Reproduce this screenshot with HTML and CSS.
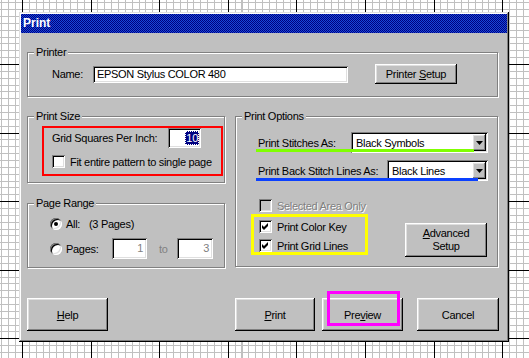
FILE: index.html
```html
<!DOCTYPE html>
<html lang="en">
<head>
    <meta charset="UTF-8">
    <title>Print</title>
    <link rel="stylesheet" href="styles.css">
</head>
<body>
    <div class="window">
        <div class="titlebar"><span class="title">Print</span></div>

        <div class="window-body">
            <fieldset class="group">
                <legend>Printer</legend>
                <div class="printer-row">
                    <span class="name-label">Name:</span>
                    <div class="sunken name-field">EPSON Stylus COLOR 480</div>
                    <button class="btn setup-btn">Printer <u>S</u>etup</button>
                </div>
            </fieldset>

            <div class="columns">
                <div class="col-left">
                    <fieldset class="group">
                        <legend>Print Size</legend>
                        <div class="mark-red">
                            <div class="size-row">
                                <span class="size-label">Grid Squares Per Inch:</span>
                                <div class="sunken grid-field"><span class="selected">10</span></div>
                            </div>
                            <div class="check-row">
                                <span class="checkbox"></span>
                                <span>Fit entire pattern to single page</span>
                            </div>
                        </div>
                    </fieldset>

                    <fieldset class="group range-group">
                        <legend>Page Range</legend>
                        <div class="range-inner">
                            <div class="radio-row">
                                <span class="radio checked"></span>
                                <span class="all-label">All:</span>
                                <span>(3 Pages)</span>
                            </div>
                            <div class="radio-row pages-row">
                                <span class="radio"></span>
                                <span class="pages-label">Pages:</span>
                                <div class="sunken page-field">1</div>
                                <span class="to">to</span>
                                <div class="sunken page-field wide">3</div>
                            </div>
                        </div>
                    </fieldset>
                </div>

                <fieldset class="group options-group">
                    <legend>Print Options</legend>
                    <div class="options-inner">
                        <div class="opt-row">
                            <span>Print Stitches As:</span>
                            <div class="sunken combo combo-wide">
                                <span class="combo-text">Black Symbols</span>
                                <span class="btn drop-btn"><svg width="7" height="4" viewBox="0 0 7 4"><path d="M0 0h7L3.5 4z"/></svg></span>
                            </div>
                            <span class="mark-line green"></span>
                        </div>
                        <div class="opt-row second">
                            <span>Print Back Stitch Lines As:</span>
                            <div class="sunken combo combo-narrow">
                                <span class="combo-text">Black Lines</span>
                                <span class="btn drop-btn"><svg width="7" height="4" viewBox="0 0 7 4"><path d="M0 0h7L3.5 4z"/></svg></span>
                            </div>
                            <span class="mark-line blue"></span>
                        </div>

                        <div class="check-row disabled-row">
                            <span class="checkbox disabled"></span>
                            <span class="disabled-text">Selected Area Only</span>
                        </div>

                        <div class="options-bottom">
                            <div class="mark-yellow">
                                <div class="check-row">
                                    <span class="checkbox"><svg width="13" height="13" viewBox="0 0 13 13"><path d="M3 5l2 2 4-4v3l-4 4-2-2z"/></svg></span>
                                    <span>Print Color Key</span>
                                </div>
                                <div class="check-row">
                                    <span class="checkbox"><svg width="13" height="13" viewBox="0 0 13 13"><path d="M3 5l2 2 4-4v3l-4 4-2-2z"/></svg></span>
                                    <span>Print Grid Lines</span>
                                </div>
                            </div>
                            <button class="btn advanced-btn"><u>A</u>dvanced<br>Setup</button>
                        </div>
                    </div>
                </fieldset>
            </div>

            <div class="button-row">
                <button class="btn big-btn"><u>H</u>elp</button>
                <button class="btn big-btn print-btn"><u>P</u>rint</button>
                <div class="preview-wrap">
                    <button class="btn big-btn">Pre<u>v</u>iew</button>
                    <span class="mark-magenta"></span>
                </div>
                <button class="btn big-btn cancel-btn">Cancel</button>
            </div>
        </div>
    </div>
</body>
</html>
```

FILE: styles.css
```css
html, body {
    height: 100%;
}

body {
    margin: 0;
    overflow: hidden;
    font: 11px "Liberation Sans", Arial, sans-serif;
    letter-spacing: -0.3px;
    color: #000;
    /* graph paper behind the dialog */
    background-color: #fff;
    background-image:
        repeating-linear-gradient(to right, transparent 0 22px, #000 22px 23px, transparent 23px 68.6px),
        repeating-linear-gradient(to bottom, transparent 0 64px, #000 64px 65px, transparent 65px 68.6px),
        repeating-linear-gradient(to right, transparent 0 1.4px, #c0c0c0 1.4px 2.4px, transparent 2.4px 6.86px),
        repeating-linear-gradient(to bottom, transparent 0 2.2px, #c0c0c0 2.2px 3.2px, transparent 3.2px 6.86px);
}

.window {
    width: 490px;
    height: 330px;
    margin: 12px 0 0 19px;
    padding: 2px;
    box-sizing: border-box;
    background: #c0c0c0;
    box-shadow: inset -1px -1px #000, inset 1px 1px #dfdfdf, inset -2px -2px #808080, inset 2px 2px #fff;
}

.titlebar {
    height: 19px;
    padding-left: 2px;
    background: repeating-conic-gradient(#000080 0 25%, #1848d8 0 50%) 0 0 / 2px 2px;
}

.title {
    color: #fff;
    font-weight: bold;
    font-size: 12px;
    line-height: 19px;
    letter-spacing: 0;
}

.window-body {
    padding: 13px 9px 0 6px;
}

/* group boxes */
.group {
    margin: 0;
    padding: 0;
    min-width: 0;
    border: 1px solid #808080;
    box-shadow: inset 1px 1px #fff, 1px 1px #fff;
}

.group legend {
    margin-left: 6px;
    padding: 0 2px;
    line-height: 13px;
    background: #c0c0c0;
}

/* shared win95 bevels */
.sunken {
    background: #fff;
    box-sizing: border-box;
    box-shadow: inset 1px 1px #808080, inset -1px -1px #fff, inset 2px 2px #000, inset -2px -2px #dfdfdf;
}

.btn {
    display: block;
    padding: 0;
    border: 0;
    background: #c0c0c0;
    color: #000;
    font: inherit;
    letter-spacing: inherit;
    box-sizing: border-box;
    box-shadow: inset -1px -1px #000, inset 1px 1px #fff, inset -2px -2px #808080, inset 2px 2px #dfdfdf;
}

.printer-row {
    display: flex;
    align-items: center;
    height: 20px;
    padding: 5px 0 12px 24px;
}

.name-label {
    width: 41px;
}

.name-field {
    width: 255px;
    height: 17px;
    padding-left: 4px;
    line-height: 17px;
}

.setup-btn {
    width: 82px;
    height: 20px;
    margin-left: 27px;
}

.columns {
    display: flex;
    align-items: flex-start;
    gap: 10px;
    margin-top: 13px;
}

.col-left {
    width: 198px;
}

.options-group {
    width: 263px;
    box-sizing: border-box;
}

/* annotation boxes drawn on the screenshot */
.mark-red {
    margin: 3px 1px 6px 14px;
    padding: 0 0 6px 8px;
    border: 2px solid #ff0000;
}

.size-row {
    display: flex;
    align-items: center;
    height: 20px;
}

.size-label {
    width: 116px;
}

.grid-field {
    display: flex;
    align-items: center;
    justify-content: flex-end;
    width: 33px;
    height: 20px;
    padding-right: 2px;
}

.selected {
    background: #000080;
    color: #fff;
    line-height: 14px;
    padding: 0 1px;
    outline: 1px dotted #fff;
    outline-offset: -1px;
}

.check-row {
    display: flex;
    align-items: center;
    height: 13px;
    margin-top: 7px;
}

.checkbox {
    display: block;
    width: 13px;
    height: 13px;
    margin-right: 5px;
    flex-shrink: 0;
    background: #fff;
    box-shadow: inset 1px 1px #808080, inset -1px -1px #fff, inset 2px 2px #000, inset -2px -2px #dfdfdf;
}

.checkbox svg {
    display: block;
}

.checkbox.disabled {
    background: #c0c0c0;
}

.disabled-text {
    color: #808080;
    text-shadow: 1px 1px #fff;
}

/* page range */
.range-group {
    margin-top: 14px;
}

.range-inner {
    padding: 8px 0 8px 22px;
}

.radio-row {
    display: flex;
    align-items: center;
    height: 12px;
}

.pages-row {
    height: 21px;
    margin-top: 8px;
}

.radio {
    position: relative;
    width: 12px;
    height: 12px;
    margin-right: 4px;
    border-radius: 50%;
    background: #fff;
    box-shadow: inset 1px 1px #808080, inset -1px -1px #fff, inset 2px 2px #000, inset -2px -2px #dfdfdf;
}

.radio.checked::after {
    content: "";
    position: absolute;
    left: 4px;
    top: 4px;
    width: 4px;
    height: 4px;
    border-radius: 50%;
    background: #000;
}

.all-label {
    width: 23px;
}

.pages-label {
    width: 46px;
}

.page-field {
    width: 35px;
    height: 21px;
    padding-right: 4px;
    text-align: right;
    line-height: 21px;
    color: #808080;
}

.page-field.wide {
    width: 36px;
}

.to {
    width: 30px;
    padding-left: 12px;
    box-sizing: border-box;
    color: #808080;
}

/* print options */
.options-inner {
    padding: 0 9px 9px 22px;
}

.opt-row {
    position: relative;
    display: flex;
    align-items: center;
    justify-content: space-between;
    height: 21px;
    margin-top: 9px;
}

.opt-row.second {
    margin-top: 7px;
}

.combo {
    display: flex;
    align-items: center;
    height: 21px;
}

.combo-wide {
    width: 137px;
}

.combo-narrow {
    width: 101px;
}

.combo-text {
    padding-left: 5px;
}

.drop-btn {
    display: flex;
    align-items: center;
    justify-content: center;
    width: 14px;
    height: 17px;
    margin: 0 2px 0 auto;
}

.mark-line {
    position: absolute;
    left: -2px;
    height: 3px;
}

.mark-line.green {
    top: 17px;
    width: 218px;
    background: #80ff00;
}

.mark-line.blue {
    top: 18px;
    width: 222px;
    background: #0a40ff;
}

.disabled-row {
    margin-top: 18px;
    margin-left: 1px;
}

.options-bottom {
    display: flex;
    align-items: flex-start;
    margin-top: 2px;
}

.mark-yellow {
    width: 117px;
    height: 41px;
    margin-left: -7px;
    padding: 3px 0 0 5px;
    box-sizing: border-box;
    border: 3px solid #ffff00;
}

.mark-yellow .check-row {
    margin-top: 0;
}

.mark-yellow .check-row + .check-row {
    margin-top: 6px;
}

.advanced-btn {
    width: 82px;
    height: 34px;
    margin: 9px 1px 0 auto;
    line-height: 13px;
}

/* bottom buttons */
.button-row {
    display: flex;
    margin-top: 30px;
}

.big-btn {
    width: 81px;
    height: 33px;
    flex-shrink: 0;
}

.print-btn {
    width: 80px;
    margin-left: 127px;
}

.preview-wrap {
    position: relative;
    margin-left: 7px;
}

.mark-magenta {
    position: absolute;
    left: 5px;
    top: -7px;
    width: 73px;
    height: 35px;
    box-sizing: border-box;
    border: 3px solid #ff00ff;
}

.cancel-btn {
    width: 82px;
    margin-left: 14px;
}
```
